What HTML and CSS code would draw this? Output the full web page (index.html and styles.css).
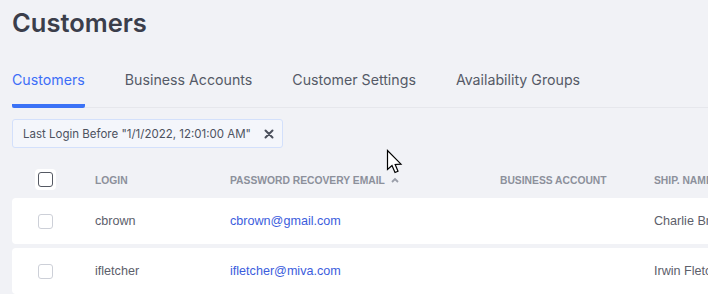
FILE: index.html
```html
<!DOCTYPE html>
<html>
<head>
<meta charset="utf-8">
<link rel="stylesheet" href="styles.css">
</head>
<body>
<div class="page">
  <h1 class="title">Customers</h1>
  <nav class="tabs">
    <a class="tab active">Customers</a>
    <a class="tab">Business Accounts</a>
    <a class="tab">Customer Settings</a>
    <a class="tab">Availability Groups</a>
  </nav>
  <div class="filters">
    <div class="chip">
      <span class="chip-text">Last Login Before "1/1/2022, 12:01:00 AM"</span>
      <svg class="chip-x" width="10" height="10" viewBox="0 0 10 10"><path d="M1.5 1.5L8.5 8.5M8.5 1.5L1.5 8.5" stroke="#4b505c" stroke-width="2" stroke-linecap="round"/></svg>
    </div>
  </div>
  <div class="table">
    <div class="row head">
      <div class="cell check"><span class="cb-wrap"><span class="cb dark"></span></span></div>
      <div class="cell">LOGIN</div>
      <div class="cell">PASSWORD RECOVERY EMAIL
        <svg class="sort" width="8" height="6" viewBox="0 0 8 6"><path d="M1 5L4 2L7 5" stroke="#9a9ea9" stroke-width="1.8" fill="none"/></svg>
      </div>
      <div class="cell">BUSINESS ACCOUNT</div>
      <div class="cell">SHIP. NAME</div>
    </div>
    <div class="row body">
      <div class="cell check"><span class="cb"></span></div>
      <div class="cell">cbrown</div>
      <div class="cell link">cbrown@gmail.com</div>
      <div class="cell"></div>
      <div class="cell">Charlie Brown</div>
    </div>
    <div class="row body">
      <div class="cell check"><span class="cb"></span></div>
      <div class="cell">ifletcher</div>
      <div class="cell link">ifletcher@miva.com</div>
      <div class="cell"></div>
      <div class="cell">Irwin Fletcher</div>
    </div>
  </div>
</div>
<svg class="cursor" width="18" height="28" viewBox="0 0 18 28"><path d="M1.5 1.5L1.5 20.5L6 16.5L9 23.5L12 22.2L9.2 15.5L15 15.2Z" fill="#fff" stroke="#000" stroke-width="1.2" stroke-linejoin="miter"/></svg>
</body>
</html>
```
FILE: styles.css
```css
html, body {
  margin: 0;
  padding: 0;
  background: #f1f2f6;
  overflow: hidden;
  height: 294px;
}
.page {
  padding: 0 0 0 12px;
  font-family: Inter, "Liberation Sans", sans-serif;
  width: 900px;
}
.title {
  margin: 0;
  padding-top: 6px;
  font-size: 25.5px;
  line-height: 34px;
  font-weight: 600;
  color: #3b3e4b;
  letter-spacing: 0;
}
.tabs {
  display: flex;
  gap: 40px;
  margin-top: 30px;
  border-bottom: 1px solid #e6e7ec;
  width: 696px;
}
.tab {
  font-size: 14.2px;
  line-height: 20px;
  color: #555a67;
  padding-bottom: 14px;
  border-bottom: 4px solid transparent;
  margin-bottom: -1px;
}
.tab.active {
  color: #3d6ef7;
  border-bottom-color: #3b72f6;
  border-radius: 0 0 2px 2px;
}
.filters {
  display: flex;
  padding-top: 11px;
}
.chip {
  display: flex;
  align-items: center;
  height: 27px;
  padding: 0 8px 0 10px;
  background: #f4f6fb;
  border: 1px solid #d3e0fb;
  border-radius: 3px;
  gap: 13px;
}
.chip-text {
  font-size: 11.5px;
  color: #4c5260;
}
.chip-x { display: block; }
.table {
  margin-top: 12px;
}
.row {
  display: grid;
  grid-template-columns: 83px 135px 270px 154px 240px;
  align-items: center;
}
.row.head {
  height: 38px;
  padding-top: 2px;
  box-sizing: border-box;
  font-family: "Liberation Sans", Arial, sans-serif;
  font-weight: 700;
  font-size: 10.3px;
  color: #8c909b;
}
.row.head .cell.check { margin-top: -2px; }
.row.body {
  height: 46px;
  background: #fff;
  border-radius: 4px;
  margin-bottom: 4px;
  font-family: "Liberation Sans", Arial, sans-serif;
  font-size: 12.6px;
  color: #5d606b;
}
.cell { white-space: nowrap; }
.cell.check {
  display: flex;
  padding-left: 26px;
}
.cb-wrap {
  width: 21px;
  height: 21px;
  background: #fff;
  border-radius: 4px;
  display: flex;
  align-items: center;
  justify-content: center;
  margin-left: -3px;
}
.cb {
  width: 13px;
  height: 13px;
  border: 1px solid #cdd0d8;
  border-radius: 3px;
  background: #fff;
}
.cb.dark {
  border: 1.5px solid #555963;
  border-radius: 3px;
}
.link { color: #3c5ddd; }
.sort { margin-left: 3px; vertical-align: 1px; }
.cursor {
  position: absolute;
  left: 386px;
  top: 149px;
}
```
